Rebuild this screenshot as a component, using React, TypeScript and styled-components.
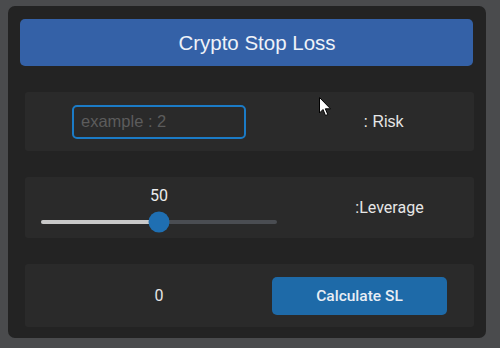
import React, {useState} from "react";
import styled, {createGlobalStyle} from "styled-components";

const GlobalStyle = createGlobalStyle`
    html, body {
        margin: 0;
        padding: 0;
        background: #4a4b4d;
        font-family: "Liberation Sans", Arial, sans-serif;
    }
`;

const Page = styled.div`
    width: 500px;
    height: 348px;
    padding: 6px 14px 0 8px;
    box-sizing: border-box;
    position: relative;
`;

const Panel = styled.div`
    width: 478px;
    height: 332px;
    background: #232323;
    border-radius: 7px;
    box-sizing: border-box;
    padding: 13px 12px 11px 12px;
    display: flex;
    flex-direction: column;
`;

const Header = styled.div`
    height: 47px;
    margin-right: 1px;
    padding-left: 21px;
    background: #3461a7;
    border-radius: 5px;
    color: #eef2f8;
    font-size: 20.5px;
    display: flex;
    align-items: center;
    justify-content: center;
`;

const Rows = styled.div`
    display: flex;
    flex-direction: column;
    gap: 26px;
    margin: 26px 0 0 5px;
`;

const Row = styled.div<{ $h: number }>`
    height: ${p => p.$h}px;
    background: #2a2a2a;
    border-radius: 3px;
    display: flex;
    align-items: center;
`;

const LeftCell = styled.div`
    width: 268px;
    flex-shrink: 0;
    display: flex;
    flex-direction: column;
    align-items: center;
    justify-content: center;
`;

const RightCell = styled.div<{ $shift: number }>`
    flex: 1;
    min-width: 0;
    display: flex;
    justify-content: center;
    padding-left: ${p => Math.max(0, p.$shift)}px;
    padding-right: ${p => Math.max(0, -p.$shift)}px;
`;

const Label = styled.span<{ $roboto?: boolean }>`
    color: #e6e6e6;
    font-size: 16px;
    white-space: nowrap;
    font-family: ${p => p.$roboto ? "Roboto, sans-serif" : "\"Liberation Sans\", Arial, sans-serif"};
`;

const RiskInput = styled.input`
    width: 174px;
    height: 34px;
    box-sizing: border-box;
    border: 2px solid #1b7bc6;
    border-radius: 5px;
    background: transparent;
    color: #ddd;
    font-family: "Liberation Sans", Arial, sans-serif;
    font-size: 16.5px;
    padding: 0 7px;
    outline: none;

    &::placeholder {
        color: #5c5c5c;
    }
`;

const SliderValue = styled.div`
    color: #ececec;
    font-family: Roboto, sans-serif;
    font-size: 16px;
    line-height: 16px;
    margin-bottom: 16px;
`;

const Track = styled.div`
    width: 236px;
    height: 4px;
    margin-bottom: 4px;
    background: #4a4d52;
    border-radius: 2px;
    position: relative;
`;

const Fill = styled.div`
    height: 100%;
    background: #c9c9c9;
    border-radius: 2px;
`;

const Thumb = styled.div`
    position: absolute;
    top: 50%;
    width: 21px;
    height: 21px;
    border-radius: 50%;
    background: #1f6fb2;
    transform: translate(-50%, -50%);
`;

const Result = styled.div`
    color: #e6e6e6;
    font-family: Roboto, sans-serif;
    font-size: 16px;
`;

const CalcButton = styled.button`
    width: 175px;
    height: 38px;
    flex-shrink: 0;
    border: none;
    border-radius: 5px;
    background: #1e6aa8;
    color: #e8eef5;
    font-family: Roboto, sans-serif;
    font-weight: 500;
    font-size: 15.5px;
    cursor: pointer;
`;

const Cursor = styled.svg`
    position: absolute;
    left: 319px;
    top: 97px;
`;

export default function App() {
    const [leverage] = useState(50);
    const pct = (leverage - 1) / 99 * 100 + 0.5;

    return (
        <Page>
            <GlobalStyle/>
            <Panel>
                <Header>Crypto Stop Loss</Header>
                <Rows>
                    <Row $h={59}>
                        <LeftCell>
                            <RiskInput placeholder="example : 2"/>
                        </LeftCell>
                        <RightCell $shift={0}>
                            <Label>: Risk</Label>
                        </RightCell>
                    </Row>
                    <Row $h={61}>
                        <LeftCell>
                            <SliderValue>{leverage}</SliderValue>
                            <Track>
                                <Fill style={{width: `${pct}%`}}/>
                                <Thumb style={{left: `${pct}%`}}/>
                            </Track>
                        </LeftCell>
                        <RightCell $shift={12}>
                            <Label $roboto>:Leverage</Label>
                        </RightCell>
                    </Row>
                    <Row $h={63}>
                        <LeftCell>
                            <Result>0</Result>
                        </LeftCell>
                        <RightCell $shift={-48}>
                            <CalcButton>Calculate SL</CalcButton>
                        </RightCell>
                    </Row>
                </Rows>
            </Panel>
            <Cursor width="13" height="21" viewBox="0 0 13 21">
                <path d="M0.5 0.5 L0.5 16 L4 12.5 L6.5 18.5 L8.8 17.5 L6.3 11.8 L11.5 11.8 Z" fill="#fff" stroke="#000" strokeWidth="1"/>
            </Cursor>
        </Page>
    );
}
